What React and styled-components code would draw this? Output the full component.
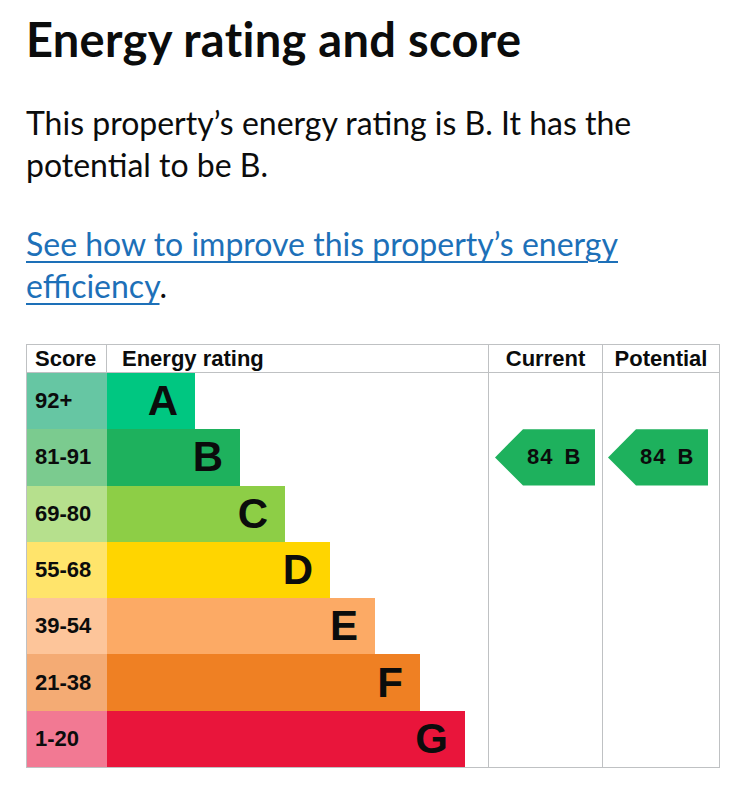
import React from "react";
import styled, { createGlobalStyle } from "styled-components";

const GlobalStyle = createGlobalStyle`
  html, body { margin: 0; padding: 0; background: #ffffff; }
  body { font-family: "Lato", "Noto Sans", sans-serif; color: #0b0c0c; }
  * { box-sizing: border-box; }
`;

const Page = styled.main`
  width: 746px;
  padding: 14px 26px 0 26px;
`;

const Title = styled.h2`
  margin: 0 0 38px 0;
  font-family: "Lato", "Noto Sans", sans-serif;
  font-weight: 700;
  font-size: 47px;
  line-height: 50px;
  letter-spacing: 0.3px;
  color: #0b0c0c;
`;

const Body = styled.p`
  margin: 0 0 37px 0;
  font-family: "Lato", "Noto Sans", sans-serif;
  font-weight: 400;
  font-size: 32px;
  line-height: 42px;
  color: #0b0c0c;
`;

const Link = styled.a`
  color: #1d70b8;
  text-decoration: underline;
  text-decoration-thickness: 1.6px;
  text-underline-offset: 5px;
`;

const Chart = styled.div`
  width: 694px;
  border: 1px solid #bfc1c3;
  font-family: "Liberation Sans", Arial, sans-serif;
  color: #0b0c0c;
`;

const Grid = `
  display: grid;
  grid-template-columns: 80px 381px 114px 1fr;
`;

const HeaderRow = styled.div`
  ${Grid}
  height: 28px;
  border-bottom: 1px solid #bfc1c3;
`;

const HeaderCell = styled.div`
  display: flex;
  align-items: center;
  justify-content: ${(p) => (p.$center ? "center" : "flex-start")};
  padding-left: ${(p) => p.$pad || 0}px;
  font-weight: 700;
  font-size: 22px;
  border-left: ${(p) => (p.$divider ? "1px solid #bfc1c3" : "0")};
  border-right: ${(p) => (p.$rightRule ? "1px solid #bfc1c3" : "0")};
  white-space: nowrap;
`;

const Rows = styled.div`
  display: grid;
  grid-template-rows: repeat(7, 1fr);
  height: 394px;
`;

const Row = styled.div`
  ${Grid}
`;

const ScoreCell = styled.div`
  display: flex;
  align-items: center;
  padding-left: 8px;
  background: ${(p) => p.$bg};
  font-weight: 700;
  font-size: 22px;
`;

const RatingCell = styled.div`
  display: flex;
  align-items: stretch;
`;

const Bar = styled.div`
  display: flex;
  align-items: center;
  justify-content: flex-end;
  padding-right: 17px;
  background: ${(p) => p.$bg};
  font-weight: 700;
  font-size: 42px;
  line-height: 1;
`;

const SideCell = styled.div`
  display: flex;
  align-items: stretch;
  padding-left: ${(p) => p.$pad}px;
  border-left: 1px solid #bfc1c3;
`;

const Arrow = styled.div`
  width: 100px;
  display: flex;
  align-items: center;
  padding-left: 32px;
  background: ${(p) => p.$bg};
  clip-path: polygon(28px 0, 100% 0, 100% 100%, 28px 100%, 0 50%);
  font-weight: 700;
  font-size: 22px;
  letter-spacing: 1px;
  word-spacing: 4px;
  white-space: nowrap;
`;

const bands = [
  { score: "92+", letter: "A", bar: "#00c781", tint: "#66c6a3" },
  { score: "81-91", letter: "B", bar: "#1eb15d", tint: "#7bcb8f" },
  { score: "69-80", letter: "C", bar: "#8dce46", tint: "#b6e08d" },
  { score: "55-68", letter: "D", bar: "#ffd500", tint: "#ffe46b" },
  { score: "39-54", letter: "E", bar: "#fcaa65", tint: "#fdc59a" },
  { score: "21-38", letter: "F", bar: "#ef8023", tint: "#f4ab74" },
  { score: "1-20", letter: "G", bar: "#e9153b", tint: "#f27993" },
];

const current = { score: 84, letter: "B" };
const potential = { score: 84, letter: "B" };

const colorFor = (letter) => bands.find((x) => x.letter === letter).bar;

export default function App() {
  return (
    <>
      <GlobalStyle />
      <Page>
        <Title>Energy rating and score</Title>
        <Body>This property’s energy rating is B. It has the potential to be B.</Body>
        <Body>
          <Link href="#">See how to improve this property’s energy efficiency</Link>.
        </Body>
        <Chart>
          <HeaderRow>
            <HeaderCell $pad={8} $rightRule>Score</HeaderCell>
            <HeaderCell $pad={15}>Energy rating</HeaderCell>
            <HeaderCell $center $divider>Current</HeaderCell>
            <HeaderCell $center $divider>Potential</HeaderCell>
          </HeaderRow>
          <Rows>
            {bands.map((b, i) => (
              <Row key={b.letter}>
                <ScoreCell $bg={b.tint}>{b.score}</ScoreCell>
                <RatingCell>
                  <Bar $bg={b.bar} style={{ width: 88 + 45 * i }}>{b.letter}</Bar>
                </RatingCell>
                <SideCell $pad={6}>
                  {b.letter === current.letter && (
                    <Arrow $bg={colorFor(current.letter)}>
                      {current.score} {current.letter}
                    </Arrow>
                  )}
                </SideCell>
                <SideCell $pad={5}>
                  {b.letter === potential.letter && (
                    <Arrow $bg={colorFor(potential.letter)}>
                      {potential.score} {potential.letter}
                    </Arrow>
                  )}
                </SideCell>
              </Row>
            ))}
          </Rows>
        </Chart>
      </Page>
    </>
  );
}
